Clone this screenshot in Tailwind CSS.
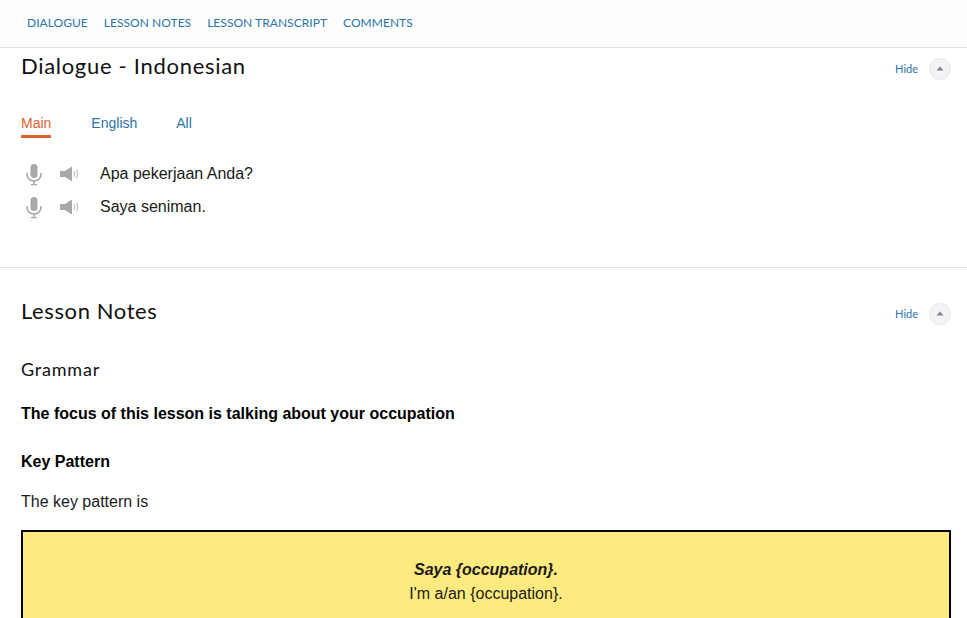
<!DOCTYPE html>
<html lang="en">
<head>
    <meta charset="UTF-8">
    <title>Lesson</title>
    <script src="https://cdn.jsdelivr.net/npm/@tailwindcss/browser@4"></script>
</head>
<body class="bg-white font-['Liberation_Sans',sans-serif] text-[#1a1a1a] h-[618px] overflow-hidden">
    <!-- Nav -->
    <nav class="h-[48px] bg-[#fdfdfd] border-b border-[#e3e3e3] flex items-center gap-[16px] pl-[27px] pb-[1px] font-['Lato',sans-serif] text-[12px] tracking-[0.04px] text-[#2a75a8]">
        <a>DIALOGUE</a>
        <a>LESSON NOTES</a>
        <a>LESSON TRANSCRIPT</a>
        <a>COMMENTS</a>
    </nav>

    <!-- Dialogue -->
    <section class="h-[220px] border-b border-[#e3e3e3] pl-[21px] pr-[16px]">
        <div class="flex items-center justify-between h-[34px]">
            <h2 class="font-['Lato',sans-serif] text-[22px] tracking-[0.7px] text-[#111]">Dialogue - Indonesian</h2>
            <div class="flex items-center gap-[11px] mt-[7px]">
                <a class="font-['Lato',sans-serif] text-[11px] text-[#2a75a8] mt-[2px]">Hide</a>
                <span class="w-[22px] h-[22px] rounded-full bg-[#f3f3f6] border border-[#e8e8ec] flex items-center justify-center">
                    <svg width="8" height="5" viewBox="0 0 8 5"><path d="M4 0.5 L7.5 4.5 L0.5 4.5 Z" fill="#7b8494"/></svg>
                </span>
            </div>
        </div>
        <div class="flex gap-[40px] mt-[31px] text-[14px] text-[#2a75a8]">
            <a class="text-[#e0622a] border-b-[3px] border-[#e0622a] pb-[1px]">Main</a>
            <a>English</a>
            <a class="-ml-[1px]">All</a>
        </div>
        <div class="mt-[24px] flex flex-col gap-[9px] text-[16px]">
            <div class="flex items-center h-[24px] pl-[4px]">
                <svg class="w-[18px] h-[24px]" viewBox="0 0 18 24" fill="#a8a8a8"><rect x="5.5" y="2" width="7" height="14" rx="3.5"/><path d="M2 11 V12.5 a7 6.5 0 0 0 14 0 V11" fill="none" stroke="#a8a8a8" stroke-width="1.6"/><rect x="8.2" y="19" width="1.6" height="3"/><rect x="6" y="22" width="6" height="1.2"/></svg>
                <svg class="ml-[16px] w-[22px] h-[18px]" viewBox="0 0 22 18"><path d="M1 6 H6 L13 1.5 V16.5 L6 12 H1 Z" fill="#a8a8a8"/><path d="M15 6 Q16.5 9 15 12 M17.5 4.5 Q20 9 17.5 13.5" fill="none" stroke="#b5b5b5" stroke-width="1"/></svg>
                <span class="ml-[19px]">Apa pekerjaan Anda?</span>
            </div>
            <div class="flex items-center h-[24px] pl-[4px]">
                <svg class="w-[18px] h-[24px]" viewBox="0 0 18 24" fill="#a8a8a8"><rect x="5.5" y="2" width="7" height="14" rx="3.5"/><path d="M2 11 V12.5 a7 6.5 0 0 0 14 0 V11" fill="none" stroke="#a8a8a8" stroke-width="1.6"/><rect x="8.2" y="19" width="1.6" height="3"/><rect x="6" y="22" width="6" height="1.2"/></svg>
                <svg class="ml-[16px] w-[22px] h-[18px]" viewBox="0 0 22 18"><path d="M1 6 H6 L13 1.5 V16.5 L6 12 H1 Z" fill="#a8a8a8"/><path d="M15 6 Q16.5 9 15 12 M17.5 4.5 Q20 9 17.5 13.5" fill="none" stroke="#b5b5b5" stroke-width="1"/></svg>
                <span class="ml-[19px]">Saya seniman.</span>
            </div>
        </div>
    </section>

    <!-- Lesson Notes -->
    <section class="pl-[21px] pr-[16px]">
        <div class="flex items-center justify-between h-[38px] mt-[23px]">
            <h2 class="font-['Lato',sans-serif] text-[22px] tracking-[0.6px] text-[#111]">Lesson Notes</h2>
            <div class="flex items-center gap-[11px] mt-[7px]">
                <a class="font-['Lato',sans-serif] text-[11px] text-[#2a75a8] mt-[2px]">Hide</a>
                <span class="w-[22px] h-[22px] rounded-full bg-[#f3f3f6] border border-[#e8e8ec] flex items-center justify-center">
                    <svg width="8" height="5" viewBox="0 0 8 5"><path d="M4 0.5 L7.5 4.5 L0.5 4.5 Z" fill="#7b8494"/></svg>
                </span>
            </div>
        </div>
        <h3 class="font-['Lato',sans-serif] text-[18px] tracking-[0.8px] text-[#111] mt-[27px]">Grammar</h3>
        <p class="font-bold text-[16px] text-black mt-[19px]">The focus of this lesson is talking about your occupation</p>
        <p class="font-bold text-[16px] text-black mt-[24px]">Key Pattern</p>
        <p class="text-[16px] mt-[16px]">The key pattern is</p>
        <div class="mt-[16px] border-2 border-black bg-[#ffea7f] pt-[26px] pb-[26px] text-center text-[16px]">
            <p class="font-bold italic">Saya {occupation}.</p>
            <p>I'm a/an {occupation}.</p>
        </div>
    </section>
</body>
</html>
